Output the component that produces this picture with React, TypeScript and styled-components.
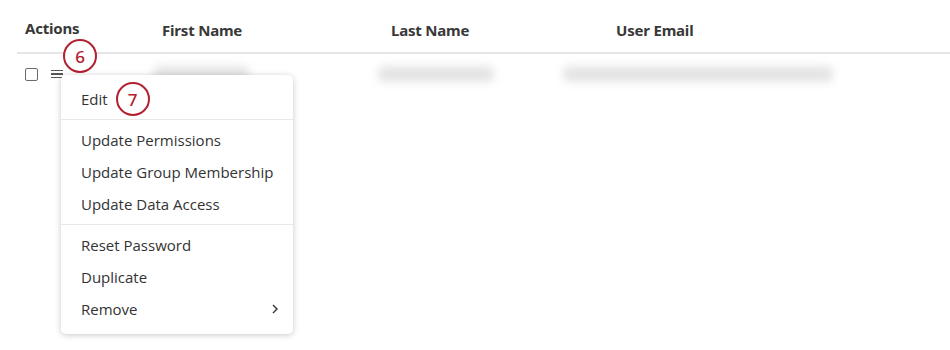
import React from "react";
import styled, { createGlobalStyle } from "styled-components";

const Global = createGlobalStyle`
  html, body { margin: 0; padding: 0; background: #fff; }
  body { font-family: "Open Sans", "Noto Sans", sans-serif; color: #333; width: 950px; height: 350px; overflow: hidden; }
`;

const Page = styled.div`
  position: relative;
  width: 950px;
  height: 350px;
  padding-left: 17px;
  box-sizing: border-box;
`;

const HeaderRow = styled.div`
  display: grid;
  grid-template-columns: 137px 229px 225px 1fr;
  height: 52px;
  align-items: end;
  padding-left: 8px;
  border-bottom: 2px solid #e6e6e6;
`;

const HeadCell = styled.div<{ $up?: boolean }>`
  font-family: "Noto Sans", sans-serif;
  font-weight: 700;
  font-size: 15px;
  color: #383838;
  letter-spacing: -0.2px;
  padding-bottom: ${(p) => (p.$up ? 14 : 12)}px;
`;

const BodyRow = styled.div`
  display: grid;
  grid-template-columns: 26px 102px 225px 185px 1fr;
  align-items: center;
  height: 40px;
  padding-left: 8px;
`;

const Checkbox = styled.span`
  width: 11px;
  height: 11px;
  border: 1px solid #6b6b6b;
  border-radius: 2px;
  box-sizing: content-box;
`;

const Burger = styled.span`
  display: flex;
  flex-direction: column;
  gap: 2px;
  width: 12px;
  span { height: 1.5px; background: #555; }
`;

const Blur = styled.span<{ $w: number }>`
  display: block;
  width: ${(p) => p.$w}px;
  height: 16px;
  background: #dedede;
  border-radius: 6px;
  filter: blur(4px);
  opacity: 0.8;
`;

const Badge = styled.span<{ $x?: number; $y?: number }>`
  position: absolute;
  left: ${(p) => p.$x ?? 0}px;
  top: ${(p) => p.$y ?? 0}px;
  width: 34px;
  height: 34px;
  border: 2.5px solid #b3202f;
  border-radius: 50%;
  background: #fff;
  color: #b3202f;
  font-family: "Noto Sans", sans-serif;
  font-size: 17px;
  font-weight: 500;
  display: flex;
  align-items: center;
  justify-content: center;
  box-sizing: border-box;
`;

const InlineBadge = styled(Badge)`
  position: static;
  margin-left: 8px;
  flex-shrink: 0;
`;

const Menu = styled.div`
  position: absolute;
  left: 61px;
  top: 75px;
  width: 232px;
  background: #fff;
  border-radius: 5px;
  box-shadow: 0 1px 6px rgba(0, 0, 0, 0.22);
  padding: 4px 0 5px;
  box-sizing: border-box;
`;

const Group = styled.div`
  padding: 4px 0;
  & + & { border-top: 1px solid #e8e8e8; }
`;

const Item = styled.div`
  display: flex;
  align-items: center;
  height: 32px;
  padding: 0 14px 0 20px;
  font-size: 15px;
  color: #333;
`;

const Chevron = styled.span`
  margin-left: auto;
  display: flex;
`;

export default function App() {
  return (
    <>
      <Global />
      <Page>
        <HeaderRow>
          <HeadCell $up>Actions</HeadCell>
          <HeadCell>First Name</HeadCell>
          <HeadCell>Last Name</HeadCell>
          <HeadCell>User Email</HeadCell>
        </HeaderRow>
        <BodyRow>
          <Checkbox />
          <Burger>
            <span />
            <span />
            <span />
          </Burger>
          <Blur $w={96} />
          <Blur $w={116} />
          <Blur $w={270} />
        </BodyRow>
        <Badge $x={63} $y={39}>6</Badge>
        <Menu>
          <Group>
            <Item>
              Edit<InlineBadge>7</InlineBadge>
            </Item>
          </Group>
          <Group>
            <Item>Update Permissions</Item>
            <Item>Update Group Membership</Item>
            <Item>Update Data Access</Item>
          </Group>
          <Group>
            <Item>Reset Password</Item>
            <Item>Duplicate</Item>
            <Item>
              Remove
              <Chevron>
                <svg width="8" height="10" viewBox="0 0 8 10">
                  <path d="M2 1 L6 5 L2 9" fill="none" stroke="#333" strokeWidth="1.4" />
                </svg>
              </Chevron>
            </Item>
          </Group>
        </Menu>
      </Page>
    </>
  );
}
